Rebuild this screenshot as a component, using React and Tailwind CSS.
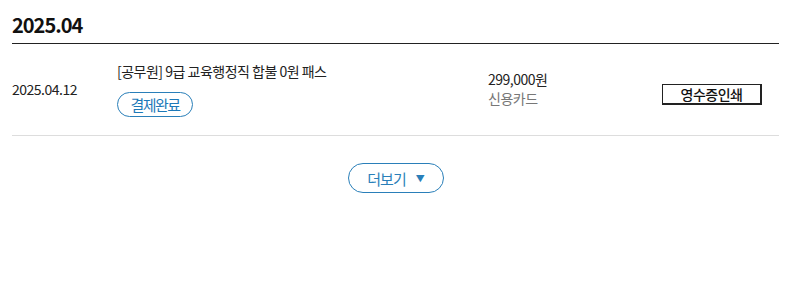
import React from "react";

const font = { fontFamily: '"Noto Sans CJK KR", "Noto Sans", sans-serif' };

export default function App() {
  return (
    <div className="w-[800px] h-[300px] bg-white" style={font}>
      <div className="ml-3 w-[767px]">
        <div className="pt-[11px] pb-[4px] border-b border-[#222]">
          <h2 className="text-[20px] leading-[28px] font-bold text-[#111] tracking-[-1px]">2025.04</h2>
        </div>
        <div className="flex items-center h-[92px] border-b border-[#ddd]">
          <div className="w-[105px] text-[14px] leading-[18px] text-[#222] tracking-[-0.5px] -mt-[2px]">2025.04.12</div>
          <div className="w-[371px] flex flex-col items-start">
            <div className="text-[14px] leading-[18px] text-[#222] tracking-[-0.5px]">[공무원] 9급 교육행정직 합불 0원 패스</div>
            <span className="mt-[12px] inline-flex items-center justify-center h-[25px] w-[76px] rounded-full border border-[#2a7fb9] text-[15px] text-[#1d79b8] tracking-[-1.5px] leading-none">결제완료</span>
          </div>
          <div className="w-[174px] flex flex-col -mt-[2px]">
            <span className="text-[14px] leading-[19px] text-[#222] tracking-[-0.5px]">299,000원</span>
            <span className="text-[14px] leading-[19px] text-[#777] tracking-[-0.5px]">신용카드</span>
          </div>
          <button className="mt-[10px] w-[100px] h-[21px] border border-r-2 border-b-2 border-[#222] bg-white text-[14px] leading-none font-medium text-[#111] tracking-[-0.5px] flex items-center justify-center">영수증인쇄</button>
        </div>
        <div className="flex justify-center mt-[27px]">
          <button className="w-[96px] h-[30px] rounded-full border border-[#2a7fb9] text-[#2a7fb9] text-[15px] tracking-[-1px] flex items-center justify-center gap-[10px] leading-none">
            <span>더보기</span>
            <span className="text-[9px]">▼</span>
          </button>
        </div>
      </div>
    </div>
  );
}
